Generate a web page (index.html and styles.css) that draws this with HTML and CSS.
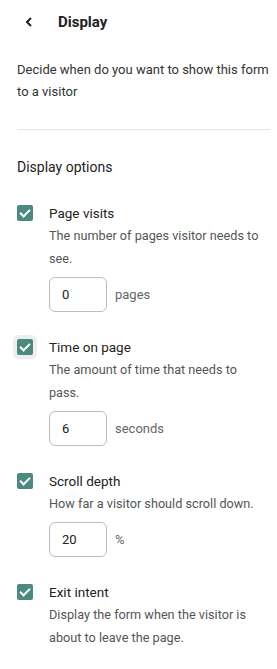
FILE: index.html
```html
<!DOCTYPE html>
<html lang="en">

<head>
    <meta charset="UTF-8">
    <meta name="viewport" content="width=device-width, initial-scale=1.0">
    <title>Display</title>
    <link rel="stylesheet" href="styles.css">
</head>

<body>
    <div class="panel">
        <div class="header">
            <a href="javascript:" class="back">
                <svg width="8" height="10" viewBox="0 0 8 10"><path d="M6 1 L2 5 L6 9" fill="none" stroke="#222" stroke-width="2"/></svg>
            </a>
            <h1>Display</h1>
        </div>
        <p class="intro">Decide when do you want to show this form to a visitor</p>
        <hr class="divider">
        <h2>Display options</h2>

        <div class="option">
            <span class="check"></span>
            <div class="body">
                <div class="title">Page visits</div>
                <div class="desc">The number of pages visitor needs to see.</div>
                <div class="field"><input type="text" value="0"><span class="unit">pages</span></div>
            </div>
        </div>

        <div class="option">
            <span class="check focus"></span>
            <div class="body">
                <div class="title">Time on page</div>
                <div class="desc">The amount of time that needs to pass.</div>
                <div class="field"><input type="text" value="6"><span class="unit">seconds</span></div>
            </div>
        </div>

        <div class="option">
            <span class="check"></span>
            <div class="body">
                <div class="title">Scroll depth</div>
                <div class="desc">How far a visitor should scroll down.</div>
                <div class="field"><input type="text" value="20"><span class="unit">%</span></div>
            </div>
        </div>

        <div class="option">
            <span class="check"></span>
            <div class="body">
                <div class="title">Exit intent</div>
                <div class="desc">Display the form when the visitor is about to leave the page.</div>
            </div>
        </div>
    </div>
</body>

</html>
```

FILE: styles.css
```css
* {
    margin: 0;
    padding: 0;
    box-sizing: border-box;
}

body {
    font-family: Roboto, "Liberation Sans", sans-serif;
    color: #222;
    background: #fff;
}

.panel {
    padding: 0 7px 0 17px;
}

.header {
    display: flex;
    align-items: center;
    height: 44px;
}

.header .back {
    display: flex;
    width: 41px;
    padding-left: 8px;
}

.header h1 {
    font-size: 15px;
    font-weight: 700;
}

.intro {
    font-size: 13px;
    line-height: 22px;
    color: #333;
    margin-top: 15px;
}

.divider {
    border: 0;
    border-top: 1px solid #e4e4e4;
    margin-top: 26px;
}

h2 {
    font-size: 14px;
    font-weight: 400;
    margin-top: 26px;
    line-height: 22px;
}

.option {
    display: flex;
    margin-top: 24px;
}

.check {
    position: relative;
    flex: none;
    width: 16px;
    height: 16px;
    margin-top: 3px;
    margin-right: 16px;
    border-radius: 2px;
    background: #4a8a80;
}

.check::after {
    content: "";
    position: absolute;
    left: 5px;
    top: 2px;
    width: 4px;
    height: 8px;
    border: solid #fff;
    border-width: 0 2px 2px 0;
    transform: rotate(45deg);
}

.check.focus {
    box-shadow: 0 0 0 4px #eeeeee;
}

.body {
    flex: 1;
}

.title {
    font-size: 13.5px;
    line-height: 22px;
}

.desc {
    font-size: 12.7px;
    line-height: 23px;
    color: #555;
}

.field {
    display: flex;
    align-items: center;
    margin-top: 7px;
}

.field input {
    width: 58px;
    height: 35px;
    border: 1px solid #bdbdbd;
    border-radius: 6px;
    padding-left: 12px;
    font-family: inherit;
    font-size: 13px;
    color: #222;
    outline: none;
}

.unit {
    margin-left: 8px;
    font-size: 13px;
    color: #666;
}
```
